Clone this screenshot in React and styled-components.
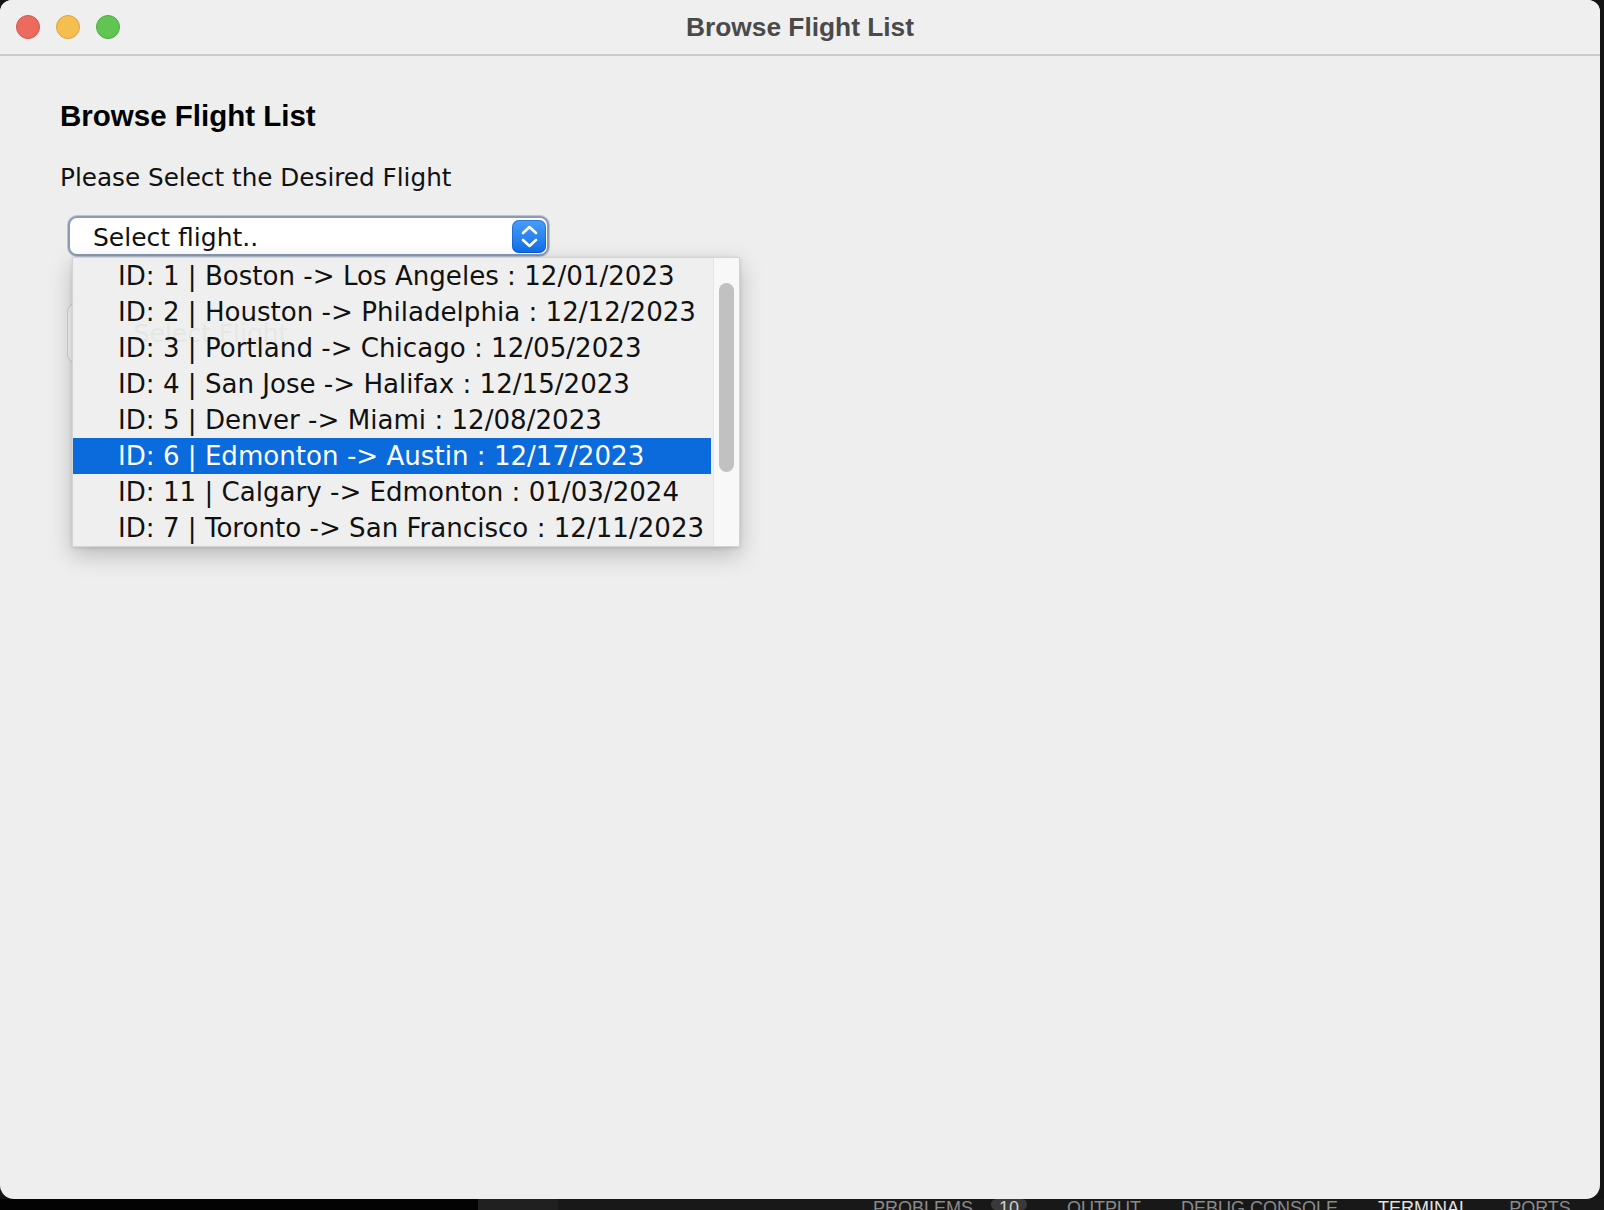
import React from 'react';
import styled, { createGlobalStyle } from 'styled-components';

const flights = [
  { id: 1, from: 'Boston', to: 'Los Angeles', date: '12/01/2023' },
  { id: 2, from: 'Houston', to: 'Philadelphia', date: '12/12/2023' },
  { id: 3, from: 'Portland', to: 'Chicago', date: '12/05/2023' },
  { id: 4, from: 'San Jose', to: 'Halifax', date: '12/15/2023' },
  { id: 5, from: 'Denver', to: 'Miami', date: '12/08/2023' },
  { id: 6, from: 'Edmonton', to: 'Austin', date: '12/17/2023' },
  { id: 11, from: 'Calgary', to: 'Edmonton', date: '01/03/2024' },
  { id: 7, from: 'Toronto', to: 'San Francisco', date: '12/11/2023' },
];

const tabs = [
  { label: 'PROBLEMS', badge: '10' },
  { label: 'OUTPUT' },
  { label: 'DEBUG CONSOLE' },
  { label: 'TERMINAL', active: true },
  { label: 'PORTS' },
];

const App = () => {
  return (
    <>
      <GlobalStyle />
      <Desktop>
        <Window>
          <TitleBar>
            <Lights>
              <Light color="#ed6a5e" edge="#d2564a" />
              <Light color="#f5bf4f" edge="#d9a340" />
              <Light color="#61c554" edge="#4ea83f" />
            </Lights>
            <WindowTitle>Browse Flight List</WindowTitle>
          </TitleBar>

          <Content>
            <Heading>Browse Flight List</Heading>
            <Label>Please Select the Desired Flight</Label>

            <ComboWrap>
              <Combo>
                <ComboText>Select flight..</ComboText>
                <ComboArrow>
                  <svg width="34" height="33" viewBox="0 0 34 33">
                    <polyline points="11,13 17.5,7 24,13" fill="none" stroke="#fff" strokeWidth="2.6" strokeLinecap="round" strokeLinejoin="round" />
                    <polyline points="11,20 17.5,26 24,20" fill="none" stroke="#fff" strokeWidth="2.6" strokeLinecap="round" strokeLinejoin="round" />
                  </svg>
                </ComboArrow>
              </Combo>

              {/* open popup list of the combo box */}
              <Popup>
                <List>
                  {flights.map((f) => (
                    <Row key={f.id} selected={f.id === 6}>
                      ID: {f.id} | {f.from} -&gt; {f.to} : {f.date}
                    </Row>
                  ))}
                </List>
                <ScrollTrack>
                  <Thumb />
                </ScrollTrack>
              </Popup>
            </ComboWrap>

            <SelectButton>Select Flight</SelectButton>
          </Content>
        </Window>

        <Panel>
          <Dock />
          <PanelTabs>
            {tabs.map((t) => (
              <Tab key={t.label} active={t.active}>
                {t.label}
                {t.badge && <Badge>{t.badge}</Badge>}
              </Tab>
            ))}
          </PanelTabs>
        </Panel>
      </Desktop>
    </>
  );
};

export default App;

const GlobalStyle = createGlobalStyle`
  html, body {
    margin: 0;
    padding: 0;
    background: #141414;
  }
  * {
    box-sizing: border-box;
  }
`;

const Desktop = styled.div`
  width: 1604px;
  height: 1210px;
  display: flex;
  flex-direction: column;
  overflow: hidden;
  background: #141414;
`;

const Window = styled.div`
  width: 1600px;
  height: 1199px;
  flex-shrink: 0;
  background: #eeeeee;
  border-radius: 12px 12px 14px 14px;
  overflow: hidden;
  display: flex;
  flex-direction: column;
`;

const TitleBar = styled.div`
  position: relative;
  height: 56px;
  flex-shrink: 0;
  background: #efefef;
  border-bottom: 2px solid #cbcbcb;
  display: flex;
  align-items: center;
  justify-content: center;
`;

const Lights = styled.div`
  position: absolute;
  left: 16px;
  top: 15px;
  display: flex;
  gap: 16px;
`;

const Light = styled.span`
  width: 24px;
  height: 24px;
  border-radius: 50%;
  background: ${(p) => p.color};
  border: 1px solid ${(p) => p.edge};
`;

const WindowTitle = styled.div`
  font-family: "Liberation Sans", Arial, sans-serif;
  font-weight: 700;
  font-size: 26.3px;
  color: #4a4a4a;
`;

const Content = styled.div`
  flex: 1;
  padding: 43px 60px 0;
  display: flex;
  flex-direction: column;
  align-items: flex-start;
`;

const Heading = styled.h1`
  margin: 0;
  font-family: "Liberation Sans", Arial, sans-serif;
  font-weight: 700;
  font-size: 29.5px;
  line-height: 34px;
  color: #000;
`;

const Label = styled.div`
  margin-top: 30px;
  font-family: "DejaVu Sans", sans-serif;
  font-size: 24.7px;
  line-height: 30px;
  color: #111;
`;

const ComboWrap = styled.div`
  position: relative;
  margin: 23px 0 0 8px;
  width: 481px;
`;

const Combo = styled.div`
  height: 40px;
  background: #fff;
  border: 2px solid #8b9bb2;
  box-shadow: 0 0 0 1px #b9c4d3;
  border-radius: 9px;
  display: flex;
  align-items: center;
  justify-content: space-between;
  padding: 0 1px 0 23px;
`;

const ComboText = styled.span`
  font-family: "DejaVu Sans", sans-serif;
  font-size: 25px;
  line-height: 30px;
  padding-top: 3px;
  color: #111;
`;

const ComboArrow = styled.span`
  width: 34px;
  height: 33px;
  border-radius: 7px;
  background: linear-gradient(#4a9cf7, #0f6fe9);
  box-shadow: inset 0 0 0 1px rgba(0, 60, 160, 0.35);
  display: flex;
`;

const Popup = styled.div`
  position: absolute;
  top: 41px;
  left: 4px;
  width: 668px;
  height: 290px;
  display: flex;
  background: rgba(238, 238, 238, 0.96);
  border: 1px solid #d4d4d4;
  box-shadow: 0 8px 22px rgba(0, 0, 0, 0.22), 0 1px 4px rgba(0, 0, 0, 0.12);
  overflow: hidden;
  z-index: 2;
`;

const List = styled.div`
  width: 638px;
  flex-shrink: 0;
  display: flex;
  flex-direction: column;
`;

const Row = styled.div`
  height: 36px;
  flex-shrink: 0;
  padding: 1px 0 0 45px;
  font-family: "DejaVu Sans", sans-serif;
  font-size: 26.1px;
  line-height: 35px;
  white-space: nowrap;
  color: ${(p) => (p.selected ? '#fff' : '#111')};
  background: ${(p) => (p.selected ? '#0b6adc' : 'transparent')};
`;

const ScrollTrack = styled.div`
  flex: 1;
  margin-left: 2px;
  background: #f8f8f8;
  border-left: 1px solid #e6e6e6;
  padding: 25px 5px 0 5px;
`;

const Thumb = styled.div`
  height: 189px;
  border-radius: 8px;
  background: #c1c1c1;
`;

const SelectButton = styled.button`
  margin: 46px 0 0 7px;
  width: 288px;
  height: 62px;
  border-radius: 10px;
  border: 1px solid #cfcfcf;
  background: #f8f8f8;
  font-family: "DejaVu Sans", sans-serif;
  font-size: 25px;
  color: #222;
`;

const Panel = styled.div`
  flex: 1;
  display: flex;
  background: #181818;
  overflow: hidden;
`;

const Dock = styled.div`
  width: 478px;
  flex-shrink: 0;
  background: #030303;
  border-right: 80px solid #202020;
  box-sizing: content-box;
`;

const PanelTabs = styled.div`
  display: flex;
  gap: 40px;
  padding-left: 315px;
`;

const Tab = styled.span`
  display: flex;
  gap: 18px;
  font-family: "Liberation Sans", Arial, sans-serif;
  font-size: 18px;
  line-height: 18px;
  white-space: nowrap;
  color: ${(p) => (p.active ? '#e2e2e2' : '#8a8a8a')};
`;

const Badge = styled.span`
  padding: 0 8px;
  border-radius: 10px;
  background: #3a3a3a;
  color: #cfcfcf;
`;
